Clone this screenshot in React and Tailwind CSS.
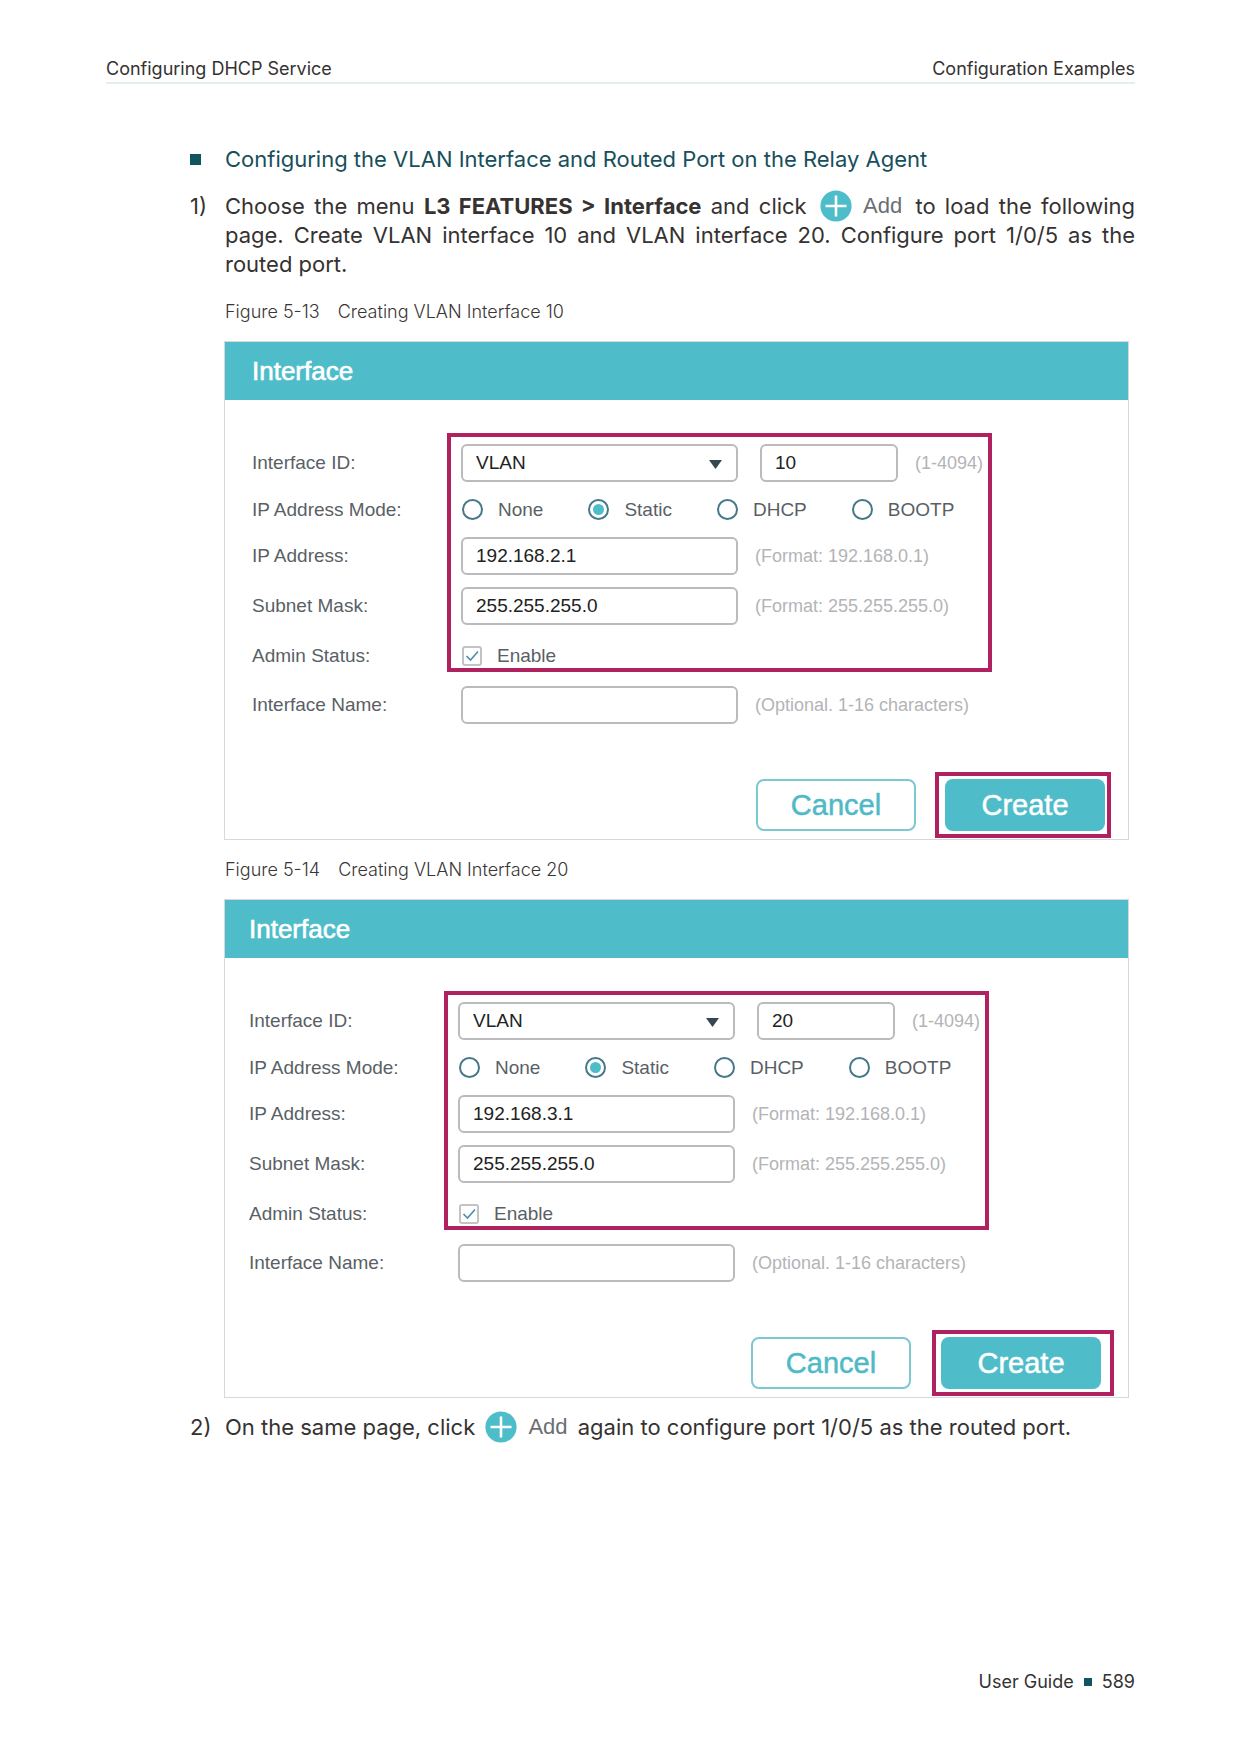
import React, { useId, useState } from "react";

const MODES = ["None", "Static", "DHCP", "BOOTP"];

const inputClass =
  "h-[38px] rounded-md border-2 border-[#bbbbbd] bg-white pl-[13px] pr-2 text-[19px] leading-6 text-[#222] outline-none";

function AddMark() {
  return (
    <span className="mx-1 -mt-[10px] -mb-[6px] inline-flex items-center gap-[11px] align-middle font-['Liberation_Sans',sans-serif] text-[22px] leading-6 text-[#6b6e73]">
      <svg className="h-8 w-8" viewBox="0 0 32 32" aria-hidden="true">
        <circle cx="16" cy="16" r="15.6" fill="#4dbdc9" />
        <path d="M16 5.5v21M5.5 16h21" stroke="#fff" strokeWidth="2.6" />
      </svg>
      <span>Add</span>
    </span>
  );
}

// One labelled line of the form
function Row({ label, htmlFor, className = "h-[38px]", children }) {
  return (
    <div className={`flex items-center ${className}`}>
      <label htmlFor={htmlFor} className="w-[209px] shrink-0">
        {label}
      </label>
      {children}
    </div>
  );
}

function Hint({ children }) {
  return <span className="ml-[17px] whitespace-nowrap text-[18px] text-[#b3b4b7]">{children}</span>;
}

function InterfaceForm({ vlanId, address, bodyClass, footerClass, createClass }) {
  const id = useId();
  const [mode, setMode] = useState("Static");
  const [enabled, setEnabled] = useState(true);

  return (
    <form
      onSubmit={(e) => e.preventDefault()}
      className="mr-[6px] -ml-px border border-[#d6d8d9] bg-white font-['Liberation_Sans',sans-serif]"
    >
      <h3 className={`bg-[#4fbdc9] py-[13px] text-[26px] leading-8 text-white [-webkit-text-stroke:0.6px_white] ${bodyClass}`}>
        Interface
      </h3>

      <div className={`pt-11 text-[19px] leading-6 text-[#5a5f66] ${bodyClass}`}>
        <div className="relative flex w-fit flex-col gap-3">
          <Row label="Interface ID:" htmlFor={`${id}-type`}>
            <div className="relative">
              <select id={`${id}-type`} defaultValue="VLAN" className={`w-[277px] appearance-none ${inputClass}`}>
                <option>VLAN</option>
              </select>
              <svg
                className="pointer-events-none absolute top-4 right-4 h-[9px] w-[13px]"
                viewBox="0 0 13 9"
                aria-hidden="true"
              >
                <path d="M0 0h13L6.5 9z" fill="#37474f" />
              </svg>
            </div>
            <input aria-label="VLAN ID" defaultValue={vlanId} className={`ml-[22px] w-[138px] ${inputClass}`} />
            <Hint>(1-4094)</Hint>
          </Row>

          <div role="radiogroup" aria-labelledby={`${id}-mode`} className="flex h-[31px] items-center">
            <span id={`${id}-mode`} className="w-[210px] shrink-0">
              IP Address Mode:
            </span>
            <div className="flex gap-[45px]">
              {MODES.map((item) => (
                <label key={item} className="flex items-center gap-[15px]">
                  <span className="relative flex h-[21px] w-[21px]">
                    <input
                      type="radio"
                      name={`${id}-mode`}
                      checked={mode === item}
                      onChange={() => setMode(item)}
                      className="peer h-[21px] w-[21px] appearance-none rounded-full border-2 border-[#47788a] bg-white"
                    />
                    <span className="pointer-events-none absolute inset-[5px] hidden rounded-full bg-[#4dbdc9] peer-checked:block" />
                  </span>
                  {item}
                </label>
              ))}
            </div>
          </div>

          <Row label="IP Address:" htmlFor={`${id}-ip`}>
            <input id={`${id}-ip`} defaultValue={address} className={`w-[277px] ${inputClass}`} />
            <Hint>(Format: 192.168.0.1)</Hint>
          </Row>

          <Row label="Subnet Mask:" htmlFor={`${id}-mask`}>
            <input id={`${id}-mask`} defaultValue="255.255.255.0" className={`w-[277px] ${inputClass}`} />
            <Hint>(Format: 255.255.255.0)</Hint>
          </Row>

          <Row label="Admin Status:" htmlFor={`${id}-status`} className="h-[37px]">
            <label className="flex items-center gap-[15px]">
              <span className="relative ml-px flex h-5 w-5">
                <input
                  id={`${id}-status`}
                  type="checkbox"
                  checked={enabled}
                  onChange={(e) => setEnabled(e.target.checked)}
                  className="peer h-5 w-5 appearance-none rounded-[3px] border-2 border-[#c2c3c5] bg-white"
                />
                <svg
                  className="pointer-events-none absolute inset-0 hidden h-5 w-5 peer-checked:block"
                  viewBox="0 0 20 20"
                  fill="none"
                  aria-hidden="true"
                >
                  <path d="M4.5 10l4 4L16 5.5" stroke="#4a8fa3" strokeWidth="1.6" />
                </svg>
              </span>
              Enable
            </label>
          </Row>

          {/* Highlight over the fields to fill in */}
          <div className="pointer-events-none absolute -top-[11px] -right-[9px] bottom-[2px] left-[195px] border-4 border-[#b0215f]" />
        </div>

        <div className="mt-3">
          <Row label="Interface Name:" htmlFor={`${id}-name`}>
            <input id={`${id}-name`} className={`w-[277px] ${inputClass}`} />
            <Hint>(Optional. 1-16 characters)</Hint>
          </Row>
        </div>
      </div>

      <div className={`mt-12 flex items-center justify-end pb-px text-[29px] leading-8 ${footerClass}`}>
        <button
          type="button"
          className="h-[52px] w-40 rounded-lg border-2 border-[#7cc9d2] text-[#4fbac6] [-webkit-text-stroke:0.5px_#4fbac6]"
        >
          Cancel
        </button>
        <div className={`border-4 border-[#b0215f] py-[3px] ${createClass}`}>
          <button
            type="submit"
            className="h-[52px] w-40 rounded-lg bg-[#4fbdc9] text-white [-webkit-text-stroke:0.5px_white]"
          >
            Create
          </button>
        </div>
      </div>
    </form>
  );
}

function Caption({ number, children }) {
  return (
    <figcaption className="flex gap-[18px] text-[18px] leading-6 font-light text-[#3a3635]">
      <span>Figure {number}</span>
      <span>{children}</span>
    </figcaption>
  );
}

function App() {
  return (
    <div className="flex min-h-screen flex-col bg-white px-[106px] pt-[57px] pb-[60px] font-[Inter,sans-serif] text-[#353231]">
      <header className="flex justify-between border-b-2 border-[#e6edf0] pb-px text-[18px] leading-6">
        <span>Configuring DHCP Service</span>
        <span>Configuration Examples</span>
      </header>

      <main className="mt-[61px] grid flex-1 grid-cols-[35px_minmax(0,1fr)] content-start pl-[84px] text-[22px] leading-[29px]">
        <span className="mt-[9px] h-[11px] w-[11px] bg-[#0e5560]" />
        <h2 className="text-[#174f5b]">Configuring the VLAN Interface and Routed Port on the Relay Agent</h2>

        <span className="mt-[18px]">1)</span>
        <p className="mt-[18px] text-justify">
          Choose the menu <strong className="font-bold">L3 FEATURES &gt; Interface</strong> and click <AddMark /> to load
          the following page. Create VLAN interface 10 and VLAN interface 20. Configure port 1/0/5 as the routed port.
        </p>

        <figure className="col-start-2 mt-[21px]">
          <Caption number="5-13">Creating VLAN Interface 10</Caption>
          <div className="mt-[17px]">
            <InterfaceForm
              vlanId="10"
              address="192.168.2.1"
              bodyClass="pl-[27px]"
              footerClass="pr-[17px]"
              createClass="ml-[19px] pr-[2px] pl-[6px]"
            />
          </div>
        </figure>

        <figure className="col-start-2 mt-[18px]">
          <Caption number="5-14">Creating VLAN Interface 20</Caption>
          <div className="mt-[17px]">
            <InterfaceForm
              vlanId="20"
              address="192.168.3.1"
              bodyClass="pl-6"
              footerClass="pr-[14px]"
              createClass="ml-[21px] pr-[9px] pl-[5px]"
            />
          </div>
        </figure>

        <span className="mt-[15px]">2)</span>
        <p className="mt-[15px]">
          On the same page, click <AddMark /> again to configure port 1/0/5 as the routed port.
        </p>
      </main>

      <footer className="flex items-center justify-end gap-[10px] text-[18px] leading-6">
        <span>User Guide</span>
        <span className="h-2 w-2 bg-[#0e5560]" />
        <span>589</span>
      </footer>
    </div>
  );
}

export default App;
